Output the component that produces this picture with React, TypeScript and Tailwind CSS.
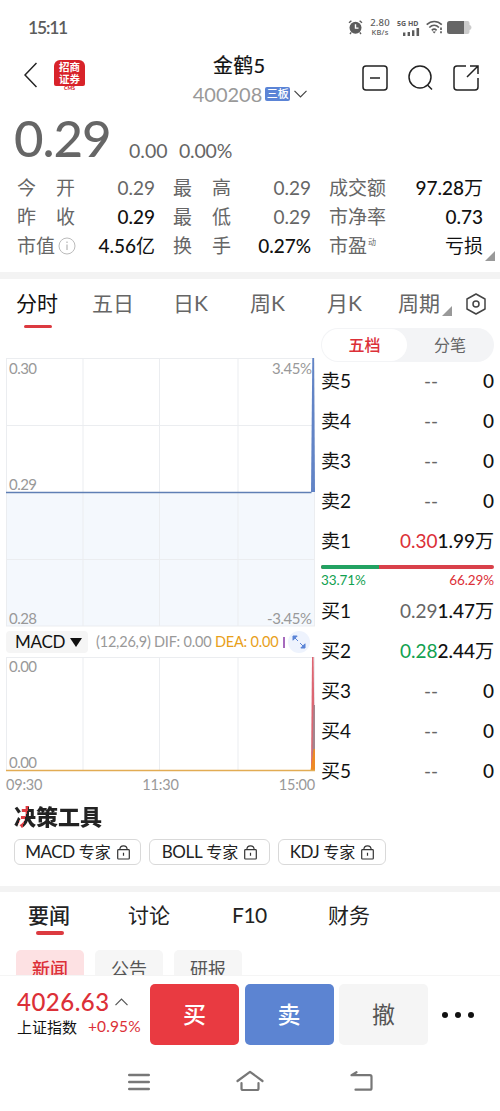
import type { ReactNode } from 'react';
import clsx from 'clsx';

const stats = [
  [
    { label: '今开', value: '0.29', muted: true },
    { label: '昨收', value: '0.29' },
    { label: '市值', value: '4.56', unit: '亿', info: true },
  ],
  [
    { label: '最高', value: '0.29', muted: true },
    { label: '最低', value: '0.29', muted: true },
    { label: '换手', value: '0.27%' },
  ],
  [
    { label: '成交额', value: '97.28', unit: '万' },
    { label: '市净率', value: '0.73' },
    { label: '市盈', value: '', unit: '亏损', sup: '动' },
  ],
];

const sells = [
  { name: '卖5', price: '--', volume: '0' },
  { name: '卖4', price: '--', volume: '0' },
  { name: '卖3', price: '--', volume: '0' },
  { name: '卖2', price: '--', volume: '0' },
  { name: '卖1', price: '0.30', volume: '1.99', unit: '万', color: 'text-[#dc3038]' },
];

const buys = [
  { name: '买1', price: '0.29', volume: '1.47', unit: '万', color: 'text-[#666]' },
  { name: '买2', price: '0.28', volume: '2.44', unit: '万', color: 'text-[#12a150]' },
  { name: '买3', price: '--', volume: '0' },
  { name: '买4', price: '--', volume: '0' },
  { name: '买5', price: '--', volume: '0' },
];

function StatusBar() {
  return (
    <div className="flex h-[54px] items-center justify-between pl-7 pr-7 text-[#5c5c5c]">
      <span className="pt-0.5 text-[17.5px] font-semibold tracking-[-1.2px]">15:11</span>
      <div className="flex items-center">
        <svg className="mr-1.5" width="15" height="16" viewBox="0 0 15 16" fill="none">
          <circle cx="7.5" cy="8.7" r="6" fill="#5c5c5c" />
          <path d="M1 3.8 3.4 1.7M14 3.8l-2.4-2.1M3.2 13.4 2 15M11.8 13.4 13 15" stroke="#5c5c5c" strokeWidth="1.4" />
          <path d="M7.5 5.2v3.9h3" stroke="#fff" strokeWidth="1.4" />
        </svg>
        <div className="flex w-[22px] flex-col items-center font-['Noto_Sans'] font-medium">
          <span className="text-[9.5px] leading-[10px] tracking-[0.2px]">2.80</span>
          <span className="text-[7.500px] leading-[9px] tracking-[0.2px]">KB/s</span>
        </div>
        <div className="ml-1.5 w-[23px]">
          <div className="font-['Noto_Sans'] text-[7px] leading-[9px] font-bold whitespace-nowrap">5G HD</div>
          <svg className="ml-1.5" width="17" height="8" viewBox="0 0 17 8" fill="#5c5c5c">
            <path d="M0 4.6h2.4V8H0zM4.6 3.9H7V8H4.6zM9 2.2h2.4V8H9zM13.5 0h2.6v8h-2.6z" />
          </svg>
        </div>
        <svg className="ml-1.5" width="17" height="14" viewBox="0 0 17 14" fill="none" stroke="#5c5c5c" strokeWidth="1.7">
          <path d="M.7 4.7C5.2.4 11.3.4 15.8 4.7M3.3 7.5c3-2.8 6.8-2.8 9.6 0M5.8 10.3c1.5-1.4 3.3-1.4 4.8 0" />
          <path d="m6.4 11.5 1.8 2 1.7-2z" fill="#5c5c5c" stroke="none" />
          <path d="M15 7.5V10M15 11.3v2" />
        </svg>
        <svg className="ml-1" width="25" height="13" viewBox="0 0 25 13">
          <path d="M17 0h3.5q2 0 2 2v2q2 .3 2 2.5T22.5 9v2q0 2-2 2H17z" fill="#ccc" />
          <path d="M2.5 0H17v13H2.5Q0 13 0 10.5v-8Q0 0 2.5 0z" fill="#666" />
        </svg>
      </div>
    </div>
  );
}

function Header() {
  return (
    <header className="flex h-[54px] items-start">
      <div className="flex w-[180px] items-center pl-6 pt-1">
        <svg width="13" height="26" viewBox="0 0 13 26" fill="none" stroke="#222" strokeWidth="1.5">
          <path d="M12.5 1 1 13l11.5 12" />
        </svg>
        <div className="ml-[17px] mt-0.5 w-[31px] text-center">
          <div className="h-[26px] rounded-t-[6px] rounded-b-[2px] bg-[#d8232a] pt-px text-[10.5px] leading-[12px] font-bold text-white">
            招商
            <br />
            证券
          </div>
          <div className="text-[5px] leading-[5px] font-black text-[#d8232a]">CMS</div>
        </div>
      </div>
      <div className="w-[140px]">
        <div className="h-7 pl-[33px] text-[20px] leading-[22px] tracking-[0.200px] text-[#111] [-webkit-text-stroke:0.2px]">金鹤5</div>
        <div className="flex h-6 items-center justify-center">
          <span className="text-[20px] leading-6 text-[#999]">400208</span>
          <span className="ml-[3px] h-[14px] w-[25px] rounded-[2px] bg-[#5b84d6] text-center text-[11px] leading-[14px] font-medium whitespace-nowrap text-white">三板</span>
          <svg className="ml-1" width="13" height="8" viewBox="0 0 13 8" fill="none" stroke="#444" strokeWidth="1.2">
            <path d="m.5.8 6 6 6-6" />
          </svg>
        </div>
      </div>
      <div className="flex items-center gap-5 pl-[42px] pt-[11px]">
        <svg width="26" height="26" viewBox="0 0 26 26" fill="none" stroke="#222" strokeWidth="1.5">
          <rect x="1" y="1" width="24" height="24" rx="3" />
          <path d="M8 13h10" />
        </svg>
        <svg width="25" height="26" viewBox="0 0 25 26" fill="none" stroke="#222" strokeWidth="1.5">
          <circle cx="12" cy="12" r="11" />
          <path d="m19.5 20 4.500 4.500" />
        </svg>
        <svg width="26" height="26" viewBox="0 0 26 26" fill="none" stroke="#222" strokeWidth="1.5">
          <path d="M13 1H4Q1 1 1 4v18q0 3 3 3h18q3 0 3-3v-9M17 1h8v8M25 1 14 12" />
        </svg>
      </div>
    </header>
  );
}

function Label({ text, info, sup }: { text: string; info?: boolean; sup?: string }) {
  return (
    <span className="flex items-center text-[#666]">
      {text.length === 2 && !info && !sup ? (
        <span className="flex w-[58px] justify-between">
          <span>{text[0]}</span>
          <span>{text[1]}</span>
        </span>
      ) : (
        <span>{text}</span>
      )}
      {info && (
        <svg className="ml-[3px]" width="18" height="18" viewBox="0 0 18 18" fill="none" stroke="#bbb">
          <circle cx="9" cy="9" r="8" />
          <path d="M9 7.5V13M9 4.5V6" strokeWidth="1.3" />
        </svg>
      )}
      {sup && <span className="mb-[7px] ml-px text-[8px] leading-none">{sup}</span>}
    </span>
  );
}

function Quote() {
  return (
    <section className="relative h-[164px] px-4">
      <div className="flex h-[65px] items-start">
        <span className="-ml-[2px] w-[115px] text-[51px] leading-[60px] font-medium tracking-[-1.1px] text-[#666]">0.29</span>
        <span className="w-[50px] pt-[26px] text-[19.5px] leading-[34px] text-[#666]">0.00</span>
        <span className="pt-[26px] text-[19.5px] leading-[34px] tracking-[-0.2px] text-[#666]">0.00%</span>
      </div>
      <div className="ml-px grid grid-cols-[139px_139px_155px] gap-x-[17px] text-[19px]">
        {stats.map((col, i) => (
          <div key={i}>
            {col.map((s) => (
              <div key={s.label} className="flex h-[29px] items-center justify-between leading-[29px]">
                <Label text={s.label} info={'info' in s} sup={'sup' in s ? (s.sup as string) : undefined} />
                <span className={clsx('pr-px whitespace-nowrap', 'muted' in s ? 'text-[#666]' : 'text-[#111]')}>
                  <span className={clsx(!('muted' in s) && 'font-medium')}>{s.value}</span>
                  {'unit' in s && (s.unit as string)}
                </span>
              </div>
            ))}
          </div>
        ))}
      </div>
      <svg className="absolute right-[5px] bottom-[11px]" width="10" height="10" viewBox="0 0 10 10">
        <path d="M10 0v10H0z" fill="#999" />
      </svg>
    </section>
  );
}

function PeriodTabs() {
  return (
    <nav className="flex h-[49px] items-start pl-4 pt-[10px] text-[21px] leading-7 text-[#666]">
      <div className="w-[76px] text-[#111]">
        分时
        <div className="ml-2 mt-[8px] h-[3px] w-7 rounded-sm bg-[#dc3a40]" />
      </div>
      <span className="w-[81px]">五日</span>
      <span className="w-[77px]">日K</span>
      <span className="w-[77px]">周K</span>
      <span className="w-[71px]">月K</span>
      <span>周期</span>
      <svg className="ml-[2px] mt-[17px]" width="10" height="10" viewBox="0 0 10 10">
        <path d="M10 0v10H0z" fill="#999" />
      </svg>
      <svg className="ml-[14px] mt-1" width="20" height="22" viewBox="0 0 20 22" fill="none" stroke="#444" strokeWidth="1.5">
        <path d="m10 1 9 5v10l-9 5-9-5V6z" strokeLinejoin="round" />
        <circle cx="10" cy="11" r="3" />
      </svg>
    </nav>
  );
}

function PriceChart() {
  return (
    <svg className="block" width="309" height="269" viewBox="0 0 309 269" fontSize="15" fill="#999">
      <rect x="0" y="134" width="309" height="134" fill="#f4f8fd" />
      <path d="M.5 0v268M77 0v268M153.500 0v268M232 0v268M308.500 0v268M0 .5h309M0 67.500h309M0 201.500h309M0 268h309" stroke="#ebedf0" fill="none" />
      <path d="M305 134 306.300 0h1.700l1 134z" fill="#6284c6" />
      <path d="M0 134.500h305.500" stroke="#5f7fb5" strokeWidth="1.300" />
      <text x="3" y="16" textLength="28">0.30</text>
      <text x="306" y="16" textAnchor="end" textLength="40">3.45%</text>
      <text x="3" y="132" textLength="28">0.29</text>
      <text x="3" y="266" textLength="28">0.28</text>
      <text x="306" y="266" textAnchor="end" textLength="45">-3.45%</text>
    </svg>
  );
}

function MacdChart() {
  return (
    <svg className="block" width="309" height="115" viewBox="0 0 309 115" fontSize="15" fill="#999">
      <path d="M.5 0v114M77 0v114M153.500 0v114M232 0v114M308.500 0v114M0 .5h309" stroke="#ebedf0" fill="none" />
      <path d="M306 0h1.600l1.400 114h-4z" fill="#dc6672" />
      <path d="M307.500 48h1.500v66h-3z" fill="#a3868f" />
      <path d="M304.500 114 307.500 92h1.500v22z" fill="#ee8a25" />
      <path d="M0 113.500h309" stroke="#e2ac54" strokeWidth="1.300" />
      <text x="3" y="15" textLength="28">0.00</text>
      <text x="3" y="111" textLength="28">0.00</text>
    </svg>
  );
}

function Charts() {
  return (
    <div className="w-[309px] pt-[30px]">
      <PriceChart />
      <div className="flex h-[30px] items-center text-[14.5px] whitespace-nowrap text-[#999]">
        <div className="flex h-[22px] w-[82px] items-center rounded-sm bg-[#f5f5f5] pl-[9px] text-[17px] tracking-[-0.3px] text-[#111]">
          MACD
          <svg className="ml-[5px]" width="12" height="9" viewBox="0 0 12 9">
            <path d="M0 0h12L6 9z" fill="#111" />
          </svg>
        </div>
        <span className="ml-2 w-[58px] tracking-[-0.2px]">(12,26,9)</span>
        <span className="w-[61px] tracking-[-0.2px]">DIF: 0.00</span>
        <span className="w-[68px] tracking-[-0.2px] text-[#e8a01a]">DEA: 0.00</span>
        <span className="h-[11px] w-[1.500px] bg-[#a66bbd]" />
        <span className="ml-[3px] flex size-[22px] items-center justify-center rounded-full bg-[#eef3fd]">
          <svg width="14" height="14" viewBox="0 0 14 14" fill="#5b84d6" stroke="#5b84d6">
            <path d="M1 5.200V1h4.200zM3 3l3 3M13 8.800V13H8.800zM11 11 8 8" />
          </svg>
        </span>
      </div>
      <MacdChart />
      <div className="flex justify-between text-[14.5px] leading-[26px] tracking-[-0.2px] text-[#999]">
        <span>09:30</span>
        <span>11:30</span>
        <span>15:00</span>
      </div>
    </div>
  );
}

type OrderRowProps = { name: string; price: string; volume: string; unit?: string; color?: string };

function OrderRow({ name, price, volume, unit, color }: OrderRowProps) {
  return (
    <div className="flex h-10 items-center text-[19px] text-[#111]">
      <span className="w-[50px]">{name}</span>
      <span className={clsx('w-[67px] text-right', color ?? 'text-[#666]')}>{price}</span>
      <span className="flex-1 text-right whitespace-nowrap">
        <span className="font-medium">{volume}</span>
        {unit}
      </span>
    </div>
  );
}

function OrderBook() {
  return (
    <div className="ml-[6px] w-[173px]">
      <div className="flex h-[34px] rounded-full bg-[#f3f4f6] p-px text-center text-[16px] leading-8">
        <span className="w-[85px] rounded-full bg-white font-medium text-[#dc3038]">五档</span>
        <span className="flex-1 text-[#666]">分笔</span>
      </div>
      <div className="-mt-px">
        {sells.map((row) => (
          <OrderRow key={row.name} {...row} />
        ))}
      </div>
      <div className="flex h-[30px] flex-col pt-1">
        <div className="flex h-1 overflow-hidden rounded-full bg-[#d9414a]">
          <div className="w-[33.71%] bg-[#22a262]" />
        </div>
        <div className="flex justify-between pt-[2px] text-[13.5px] leading-[18px] tracking-[-0.1px]">
          <span className="text-[#12a150]">33.71%</span>
          <span className="text-[#dc3038]">66.29%</span>
        </div>
      </div>
      {buys.map((row) => (
        <OrderRow key={row.name} {...row} />
      ))}
    </div>
  );
}

function Tools() {
  return (
    <section className="h-[84px] pl-[14px]">
      <h2 className="w-fit bg-[linear-gradient(106deg,#222_11%,#dc3a40_11%,#dc3a40_16.5%,#222_16.5%)] bg-clip-text text-[22px] leading-[30px] font-black text-transparent">
        决策工具
      </h2>
      <div className="mt-[7px] flex gap-2">
        {['MACD', 'BOLL', 'KDJ'].map((name) => (
          <div
            key={name}
            className={clsx(
              'flex h-[26px] items-center justify-center rounded-[6px] border border-[#d9d9d9] text-[16px] whitespace-nowrap text-[#222]',
              name === 'MACD' && 'w-[127px]',
              name === 'BOLL' && 'w-[121px]',
              name === 'KDJ' && 'w-[108px]',
            )}
          >
            <span className="text-[17px] tracking-[-0.400px]">{name}</span>
            <span className="ml-1">专家</span>
            <svg className="ml-[6px]" width="13" height="15" viewBox="0 0 13 15" fill="none" stroke="#333" strokeWidth="1.2">
              <rect x=".7" y="4.700" width="11.600" height="9.300" rx=".8" />
              <path d="M2.800 4.700Q3 .9 6.500.9t3.700 3.800M6.500 7.800v3" />
            </svg>
          </div>
        ))}
      </div>
    </section>
  );
}

function News() {
  return (
    <section className="h-[83px] overflow-hidden">
      <nav className="flex h-[58px] pl-7 pt-2 text-[21px] leading-[30px] text-[#222]">
        <div className="w-[100px] font-medium">
          要闻
          <div className="ml-2 mt-[1px] h-1 w-7 rounded-full bg-[#dc3a40]" />
        </div>
        <span className="w-[104px]">讨论</span>
        <span className="w-[96px] tracking-[-0.5px]">F10</span>
        <span>财务</span>
      </nav>
      <div className="flex gap-[11px] pl-4 text-center text-[18px] leading-[38px] text-[#555]">
        <span className="h-9 w-[68px] rounded-[5px] bg-[#fde1e3] font-medium text-[#dc3038]">新闻</span>
        <span className="h-9 w-[68px] rounded-[5px] bg-[#f6f6f6]">公告</span>
        <span className="h-9 w-[68px] rounded-[5px] bg-[#f6f6f6]">研报</span>
      </div>
    </section>
  );
}

function TradeButton({ className, children }: { className: string; children: ReactNode }) {
  return <button className={clsx('h-[61px] w-[89px] rounded-[5px] text-[23px]', className)}>{children}</button>;
}

function TradeBar() {
  return (
    <footer className="flex h-[76px] border-t border-[#f5f5f5] pt-2">
      <div className="w-[150px] pl-[17px] pt-1">
        <div className="flex h-7 items-center text-[24px] leading-7 font-medium tracking-[0.5px] text-[#dc3038]">
          4026.63
          <svg className="ml-[5px]" width="13" height="8" viewBox="0 0 13 8" fill="none" stroke="#555" strokeWidth="1.2">
            <path d="m.5 7.200 6-6 6 6" />
          </svg>
        </div>
        <div className="flex h-[22px] items-center text-[15px] whitespace-nowrap text-[#111]">
          上证指数
          <span className="ml-[11px] text-[15.5px] tracking-[0.1px] text-[#dc3038]">+0.95%</span>
        </div>
      </div>
      <div className="flex gap-[5.5px]">
        <TradeButton className="bg-[#e93a41] font-medium text-white">买</TradeButton>
        <TradeButton className="bg-[#5c84d2] font-medium text-white">卖</TradeButton>
        <TradeButton className="bg-[#f5f5f5] text-[#555]">撤</TradeButton>
      </div>
      <div className="flex h-[61px] items-center gap-[7px] pl-[14px]">
        <span className="size-1.5 rounded-full bg-[#111]" />
        <span className="size-1.5 rounded-full bg-[#111]" />
        <span className="size-1.5 rounded-full bg-[#111]" />
      </div>
    </footer>
  );
}

function SystemNav() {
  return (
    <div className="flex h-[60px] items-center gap-[86px] pl-32 pt-0.5">
      <svg width="22" height="24" viewBox="0 0 22 24" fill="none" stroke="#777" strokeWidth="2.4">
        <path d="M1.200 5h19.600M1.200 12h19.600M1.200 19h19.600" strokeLinecap="round" />
      </svg>
      <svg width="28" height="24" viewBox="0 0 28 24" fill="none" stroke="#777" strokeWidth="2.2">
        <path d="M1.500 11 14 1.800 26.500 11M5.500 13v5.500q0 1.500 1.500 1.500h14q1.500 0 1.500-1.500V13" strokeLinecap="round" strokeLinejoin="round" />
      </svg>
      <svg width="24" height="24" viewBox="0 0 24 24" fill="none" stroke="#777" strokeWidth="2.2">
        <path d="M6.500 2.200 1.500 5.200H20q1.500 0 1.500 1.500v11.500q0 1.500-1.500 1.500H5.500" strokeLinecap="round" strokeLinejoin="round" />
      </svg>
    </div>
  );
}

export default function App() {
  return (
    <main className="h-[1111px] w-[500px] overflow-hidden bg-white font-[Lato,'Noto_Sans_CJK_SC',sans-serif]">
      <StatusBar />
      <Header />
      <Quote />
      <div className="h-[7px] bg-[#f3f3f3]" />
      <PeriodTabs />
      <div className="flex h-[474px] pl-1.5">
        <Charts />
        <OrderBook />
      </div>
      <Tools />
      <div className="h-[6px] bg-[#f3f3f3]" />
      <News />
      <TradeBar />
      <SystemNav />
    </main>
  );
}
